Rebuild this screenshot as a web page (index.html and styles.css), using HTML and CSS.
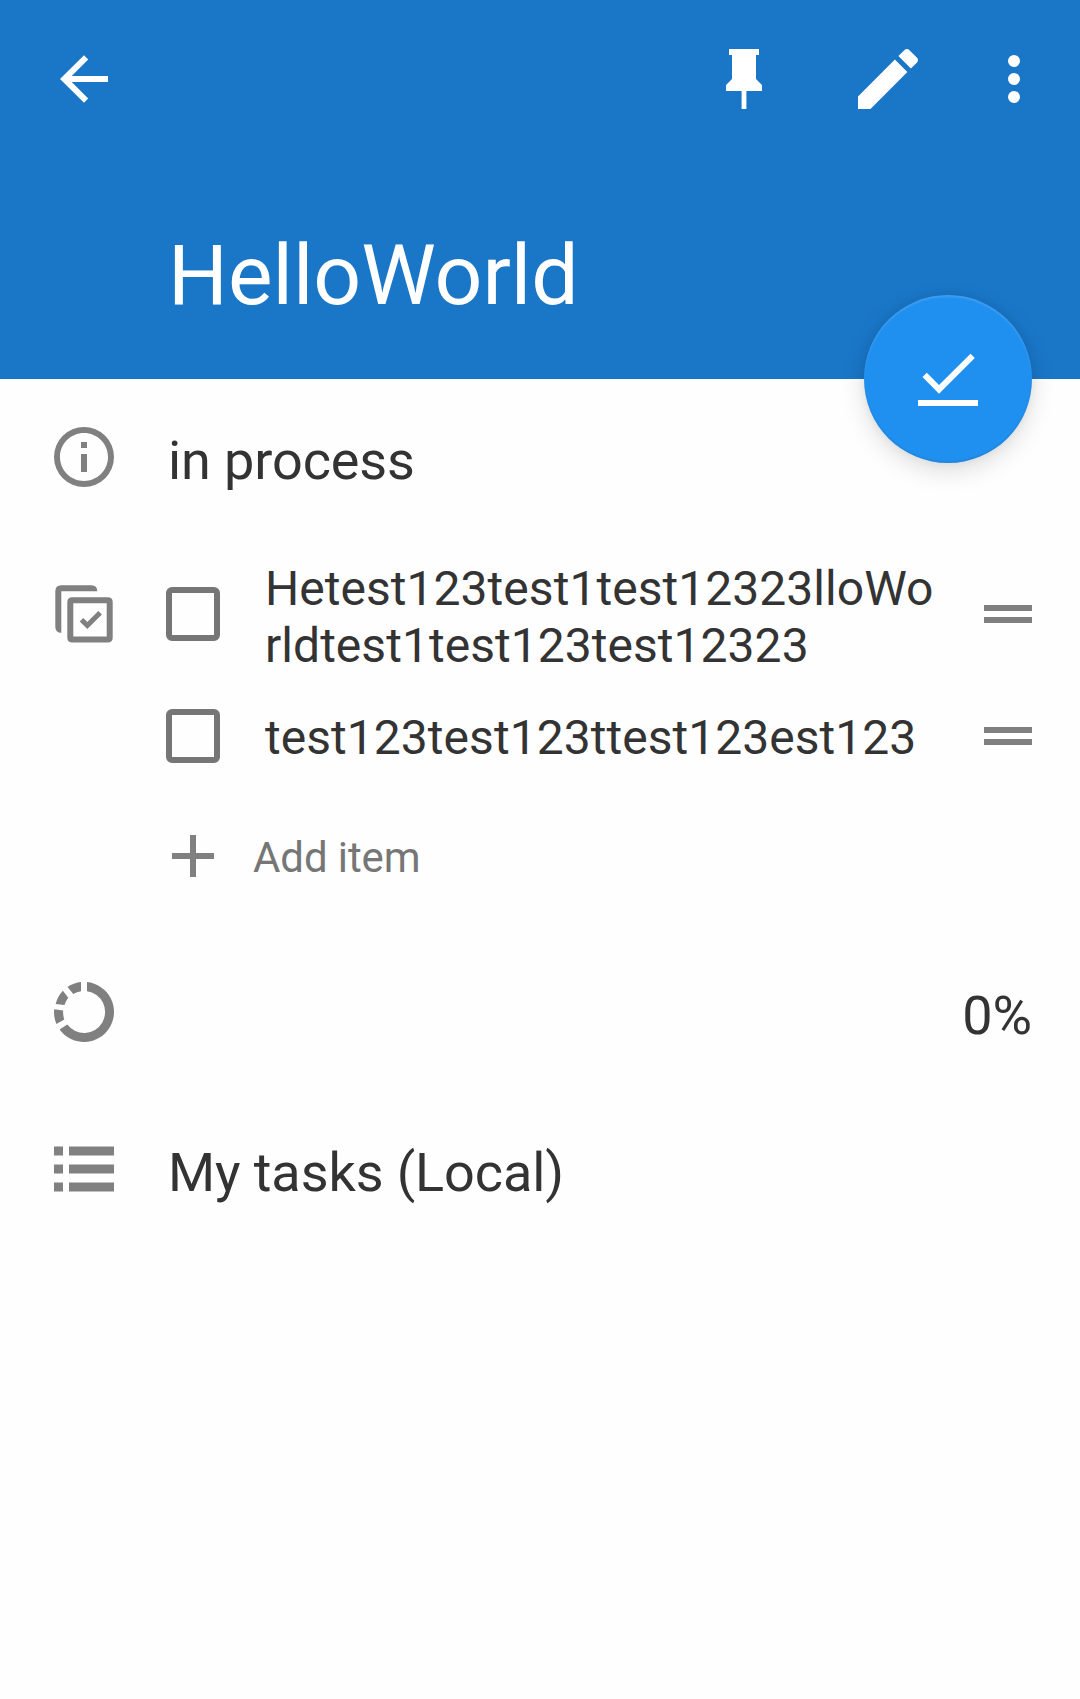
FILE: index.html
```html
<!DOCTYPE html>
<html lang="en">
<head>
<meta charset="utf-8">
<title>HelloWorld</title>
<link rel="stylesheet" href="styles.css">
</head>
<body>
<header class="header">
  <nav class="toolbar">
    <svg class="icon" viewBox="0 0 24 24"><path d="M20,11V13H7.9L13.4,18.5L12,19.9L4,12L12,4.1L13.4,5.5L7.9,11H20Z"/></svg>
    <div class="actions">
      <svg class="icon" viewBox="0 0 24 24"><path d="M16,12V4H17V2H7V4H8V12L6,14V16H11.2V22H12.8V16H18V14L16,12Z"/></svg>
      <svg class="icon icon-edit" viewBox="0 0 24 24"><path d="M20.71,7.04C21.1,6.65 21.1,6 20.71,5.63L18.37,3.29C18,2.9 17.35,2.9 16.96,3.29L15.12,5.12L18.87,8.87M3,17.25V21H6.75L17.81,9.93L14.06,6.18L3,17.25Z"/></svg>
      <svg class="icon" viewBox="0 0 24 24"><circle cx="12" cy="6" r="2"/><circle cx="12" cy="12" r="2"/><circle cx="12" cy="18" r="2"/></svg>
    </div>
  </nav>
  <h1 class="title">HelloWorld</h1>
  <button class="fab" aria-label="Complete">
    <svg class="fab-icon" viewBox="0 0 72 72"><path d="M6 57H66V63H6ZM10.5 34L14.8 29.8L27 42L58.5 10.7L62.8 15L27 50.8Z"/></svg>
  </button>
</header>
<main class="details">
  <section class="row">
    <svg class="icon" viewBox="0 0 24 24"><path d="M11,9H13V7H11M12,20C7.59,20 4,16.41 4,12C4,7.59 7.59,4 12,4C16.41,4 20,7.59 20,12C20,16.41 16.41,20 12,20M12,2A10,10 0 0,0 2,12A10,10 0 0,0 12,22A10,10 0 0,0 22,12A10,10 0 0,0 12,2M11,17H13V11H11V17Z"/></svg>
    <p class="text">in process</p>
  </section>
  <section class="row row-checklist">
    <svg class="icon" viewBox="0 0 72 72"><path d="M7.3 54.7V13.3Q7.3 7.3 13.3 7.3H43.3Q49.3 7.3 49.3 13.3H13.3V54.7Q7.3 54.7 7.3 48.7Z"/><path fill-rule="evenodd" d="M24.3 19.3H59.7Q64.7 19.3 64.7 24.3V59.4Q64.7 64.4 59.7 64.4H24.3Q19.3 64.4 19.3 59.4V24.3Q19.3 19.3 24.3 19.3ZM25.3 25.3V58.4H58.7V25.3Z"/><path d="M31.7 43.5L35.3 40L39.3 44L50.3 33L53.9 36.5L39.3 51Z"/></svg>
    <div class="checklist">
      <div class="item">
        <span class="checkbox"></span>
        <p class="item-text item-text-long">Hetest123test1test12323lloWo<br>rldtest1test123test12323</p>
        <span class="handle"></span>
      </div>
      <div class="item">
        <span class="checkbox"></span>
        <p class="item-text">test123test123ttest123est123</p>
        <span class="handle"></span>
      </div>
      <div class="item item-add">
        <svg class="plus" viewBox="0 0 42 42"><path d="M18 0H24V18H42V24H24V42H18V24H0V18H18Z"/></svg>
        <span class="add-text">Add item</span>
      </div>
    </div>
  </section>
  <section class="row row-progress">
    <svg class="icon" viewBox="0 0 72 72"><path d="M39 6.1A30 30 0 1 1 11.6 53.4L19.3 48.6A21 21 0 1 0 39 15.2ZM33 6.1V15.2A21 21 0 0 0 25.3 17.9L19.5 11.1A30 30 0 0 1 33 6.1ZM14.9 14.7L20.3 21.8A21 21 0 0 0 16.5 29L7.6 28A30 30 0 0 1 14.9 14.7ZM6.2 33.3L15.2 34.5A21 21 0 0 0 16.3 43.5L8.4 48A30 30 0 0 1 6.2 33.3Z"/></svg>
    <p class="text text-end">0%</p>
  </section>
  <section class="row row-list">
    <svg class="icon" viewBox="0 0 72 72"><path d="M6 13.5H15V22.5H6ZM21 13.5H66V22.5H21ZM6 31.5H15V40.5H6ZM21 31.5H66V40.5H21ZM6 49.5H15V58.5H6ZM21 49.5H66V58.5H21Z"/></svg>
    <p class="text">My tasks (Local)</p>
  </section>
</main>
</body>
</html>
```
FILE: styles.css
```css
* { box-sizing: border-box; }
body {
  margin: 0;
  min-height: 1699px;
  background: #fefefe;
  color: #333;
  font-family: Roboto, "Liberation Sans", sans-serif;
}
h1, p { margin: 0; font-weight: 400; }
.icon { display: block; width: 72px; height: 72px; flex: none; fill: #808080; }

.header {
  position: relative;
  height: 379px;
  padding-top: 39px;
  background: #1a76c7;
  color: #fff;
}
.header .icon { fill: #fff; }
.toolbar {
  display: flex;
  align-items: center;
  justify-content: space-between;
  height: 80px;
  padding: 0 30px 0 48px;
}
.actions { display: flex; align-items: center; }
.actions .icon-edit { width: 80px; height: 80px; margin: 0 50px 0 68px; }
.title {
  padding: 107px 0 0 168px;
  font-size: 84px;
  line-height: 100px;
}
.fab {
  position: absolute;
  right: 48px;
  bottom: -84px;
  display: flex;
  align-items: center;
  justify-content: center;
  width: 168px;
  height: 168px;
  padding: 0;
  border: 0;
  border-radius: 50%;
  background: #2090f0;
  box-shadow: 0 8px 24px rgba(0, 0, 0, .13), 0 0 10px rgba(0, 0, 0, .06),
    inset 0 2px 2px rgba(255, 255, 255, .13), inset 0 -2px 2px rgba(0, 0, 0, .07);
}
.fab-icon { width: 72px; height: 72px; fill: #fff; }

.row {
  display: flex;
  align-items: center;
  gap: 48px;
  height: 156px;
  padding: 0 48px;
}
.text {
  padding-top: 7px;
  font-size: 54px;
  line-height: 64px;
  letter-spacing: -.1px;
}
.text-end { margin-left: auto; }
.row-checklist {
  align-items: flex-start;
  gap: 46px;
  height: auto;
  padding-top: 18px;
}
.row-checklist > .icon { margin-top: 25px; }
.checklist { flex: 1; }
.item { display: flex; align-items: center; height: 122px; }
.checkbox {
  width: 54px;
  height: 54px;
  border: 6px solid #767676;
  border-radius: 6px;
}
.item-text {
  flex: 1;
  padding: 3px 0 0 45px;
  font-size: 48px;
  line-height: 57px;
  letter-spacing: .04px;
  white-space: nowrap;
}
.item-text-long { padding-top: 6px; }
.handle {
  width: 48px;
  height: 18px;
  border: solid #808080;
  border-width: 6px 0;
}
.item-add { height: 118px; padding-left: 6px; gap: 39px; }
.plus { width: 42px; height: 42px; fill: #808080; }
.add-text {
  padding-top: 3px;
  font-size: 42px;
  line-height: 50px;
  letter-spacing: -.1px;
  color: #767676;
}
.row-progress { margin-top: 19px; }
.row-list { margin-top: 1px; }
```
